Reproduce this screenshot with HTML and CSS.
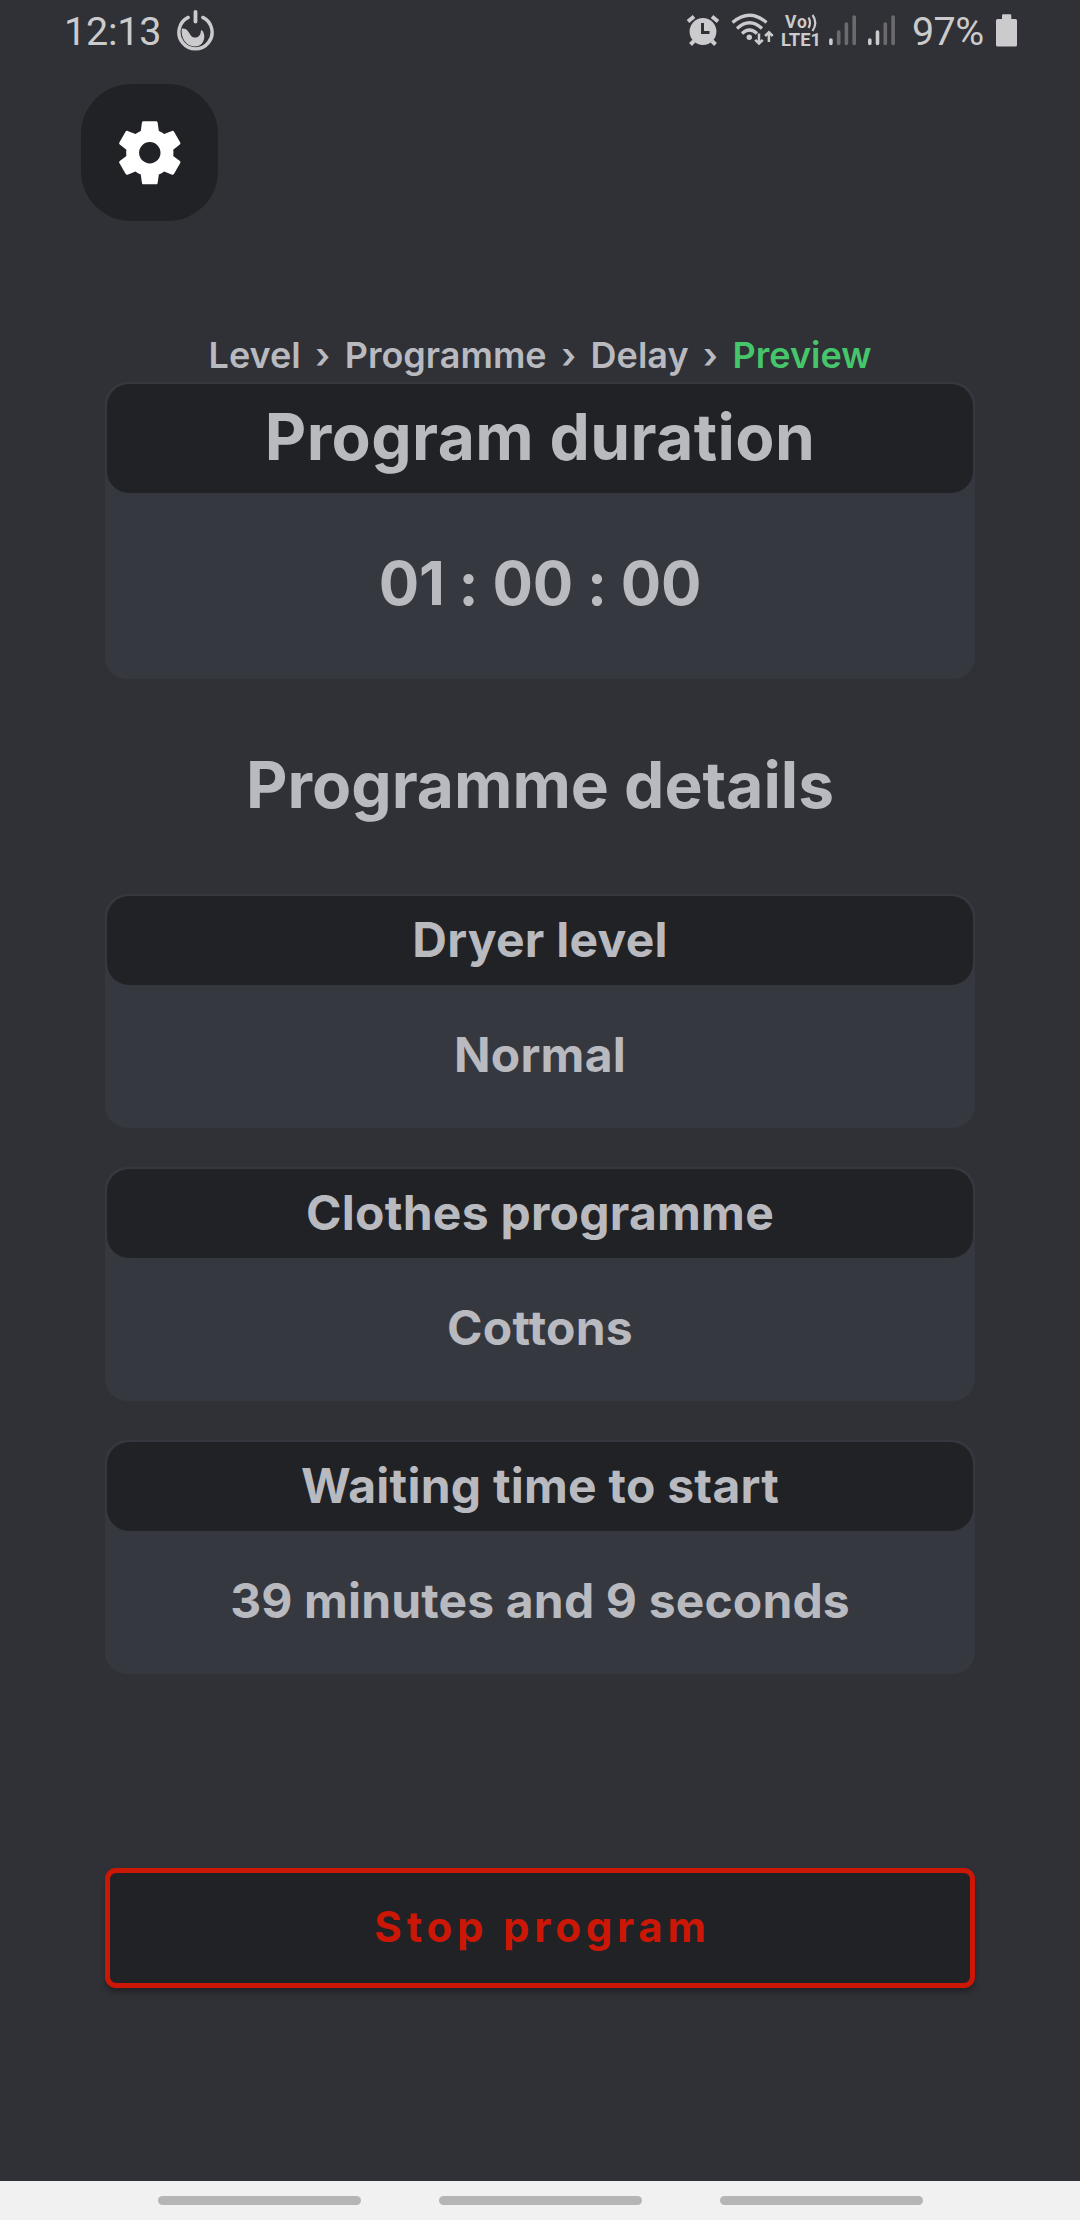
FILE: index.html
```html
<!DOCTYPE html>
<html lang="en">
<head>
<meta charset="utf-8">
<title>Dryer programme preview</title>
<link rel="stylesheet" href="styles.css">
</head>
<body>
<header class="status">
  <span class="status-text clock">12:13</span>
  <svg class="ico" width="40" height="60" viewBox="175 0 40 60">
    <path d="M188.2 17.4A16.6 16.6 0 1 0 202.800 17.400" fill="none" stroke="currentColor" stroke-width="3.4" stroke-linecap="round"/>
    <path d="M195.500 11.800V21.500" stroke="currentColor" stroke-width="3.800" stroke-linecap="round"/>
    <path d="M181.800 28.500C187 28 188.500 32 190.500 35C193.500 39.500 200.500 38 200.800 31.500L201.500 30C206.500 34 205 46.500 195 46.500C186 46.500 180.500 38 181.800 28.500Z" fill="currentColor"/>
  </svg>
  <div class="status-right">
    <svg class="ico" width="48" height="60" viewBox="680 0 48 60">
      <g fill="none" stroke="currentColor" stroke-width="4">
        <path d="M688 21.500L694 16.500M718 21.500L712 16.500M694 41L690.500 44.500M712 41L715.500 44.500"/>
      </g>
      <circle cx="703" cy="31.500" r="13.400" fill="currentColor"/>
      <path d="M702.500 23V32.500H709.500" fill="none" stroke="#303136" stroke-width="3"/>
    </svg>
    <svg class="ico" width="50" height="60" viewBox="728 0 50 60">
      <g fill="none" stroke="currentColor" stroke-width="3.200">
        <path d="M732.500 22.500Q749.500 8 766.500 22.500M737 28.500Q749.500 17 762 28.500M742 33.500Q749.500 26.500 757 33.500"/>
      </g>
      <circle cx="749.300" cy="37.200" r="2.700" fill="currentColor"/>
      <path d="M759 33.500V43M755.200 39.800L759 43.600L762.800 39.800M768.900 42V33M765.100 36L768.900 32.200L772.700 36" fill="none" stroke="currentColor" stroke-width="2.500"/>
    </svg>
    <svg class="ico" width="48" height="60" viewBox="778 0 48 60">
      <text class="net" x="785" y="28" font-size="17.500" textLength="22">Vo</text>
      <path d="M808.500 17.500Q811.500 22.500 808.500 28M812.500 15Q818 22.500 812.500 31" fill="none" stroke="currentColor" stroke-width="2.200"/>
      <text class="net" x="781" y="46" font-size="18.500" textLength="40" lengthAdjust="spacingAndGlyphs">LTE1</text>
    </svg>
    <svg class="ico" width="74" height="60" viewBox="826 0 74 60">
      <g stroke="currentColor" stroke-width="3.600" stroke-linecap="round">
        <path d="M830.900 40V43.500M869.800 40V43.500M877.500 32V43.500"/>
        <path class="dim" d="M838.700 32V43.500M846.400 24V43.500M854.200 17V43.500M885.300 24V43.500M893.100 17V43.500"/>
      </g>
    </svg>
    <span class="status-text battery-level">97%</span>
    <svg class="ico" width="30" height="60" viewBox="990 0 30 60">
      <path d="M1002 19V15.500Q1002 14.200 1003.300 14.200H1010Q1011.300 14.200 1011.300 15.500V19H1015.500Q1017 19 1017 20.500V45Q1017 46.600 1015.500 46.600H997.500Q996 46.600 996 45V20.500Q996 19 997.500 19Z" fill="currentColor"/>
    </svg>
  </div>
</header>

<main class="screen">
  <button class="settings" aria-label="Settings">
    <svg width="75.600" height="75.600" viewBox="0 0 24 24"><path fill="#fff" d="M19.430 12.980c.04-.32.07-.64.07-.98s-.03-.66-.07-.98l2.110-1.650c.19-.15.24-.42.12-.64l-2-3.460c-.12-.22-.39-.3-.61-.22l-2.490 1c-.52-.4-1.080-.73-1.690-.98l-.38-2.650C14.460 2.180 14.250 2 14 2h-4c-.25 0-.46.18-.49.42l-.38 2.650c-.61.25-1.170.59-1.690.98l-2.490-1c-.23-.09-.49 0-.61.22l-2 3.460c-.13.22-.07.49.12.64l2.110 1.650c-.04.32-.07.65-.07.98s.03.66.07.98l-2.110 1.650c-.19.15-.24.42-.12.64l2 3.460c.12.22.39.3.61.22l2.490-1c.52.4 1.080.73 1.690.98l.38 2.650c.03.24.24.42.49.42h4c.25 0 .46-.18.49-.42l.38-2.650c.61-.25 1.170-.59 1.690-.98l2.490 1c.23.09.49 0 .61-.22l2-3.460c.12-.22.07-.49-.12-.64l-2.110-1.650zM12 15.400a3.400 3.400 0 1 1 0-6.800 3.400 3.400 0 0 1 0 6.800z"/></svg>
  </button>

  <nav class="crumbs">
    <span>Level</span><span class="sep">›</span><span>Programme</span><span class="sep">›</span><span>Delay</span><span class="sep">›</span><span class="current">Preview</span>
  </nav>

  <section class="card card-main">
    <h1>Program duration</h1>
    <p>01 : 00 : 00</p>
  </section>

  <h2 class="title">Programme details</h2>

  <div class="details">
    <section class="card"><h3>Dryer level</h3><p>Normal</p></section>
    <section class="card"><h3>Clothes programme</h3><p>Cottons</p></section>
    <section class="card"><h3>Waiting time to start</h3><p class="wait">39 minutes and 9 seconds</p></section>
  </div>

  <button class="stop"><span>Stop program</span></button>
</main>

<footer class="navbar"><i></i><i></i><i></i></footer>
</body>
</html>
```
FILE: styles.css
```css
* { box-sizing: border-box; }

body {
  margin: 0;
  width: 1080px;
  height: 2220px;
  display: flex;
  flex-direction: column;
  overflow: hidden;
  background: #303136;
  color: #b9babf;
  font-family: Inter, "Liberation Sans", sans-serif;
  font-weight: 700;
  font-feature-settings: "calt" 0;
}

h1, h2, h3, p { margin: 0; font-weight: 700; }
button { font: inherit; }

.status {
  height: 60px;
  padding: 0 60px 0 64px;
  display: flex;
  align-items: center;
  color: #cbcbcd;
}
.ico { display: block; flex: none; }
.status-text {
  font: 400 39.500px/60px Roboto, "Liberation Sans", sans-serif;
  white-space: nowrap;
  padding-top: 3px;
}
.clock { width: 111px; letter-spacing: -0.200px; }
.status-right { margin-left: auto; display: flex; align-items: center; }
.battery-level { width: 90px; padding-left: 12px; letter-spacing: -0.600px; }
.net { font-family: Roboto, sans-serif; font-weight: 700; fill: currentColor; }
.dim { opacity: 0.38; }

.screen {
  flex: 1;
  padding: 24px 105px 0;
  display: flex;
  flex-direction: column;
}

.settings {
  width: 137px;
  height: 137px;
  margin-left: -24px;
  padding: 0;
  border: 0;
  border-radius: 50px;
  background: #212226;
  display: flex;
  align-items: center;
  justify-content: center;
}

.crumbs {
  margin-top: 109px;
  height: 52px;
  display: flex;
  justify-content: center;
  font-size: 36px;
  font-weight: 600;
  line-height: 50px;
}
.sep { width: 44px; text-align: center; }
.current { color: #45c66b; }

.card {
  height: 234px;
  padding: 2px;
  border-radius: 22px;
  background: #363840;
  display: flex;
  flex-direction: column;
  text-align: center;
  font-size: 48px;
  letter-spacing: 0.250px;
}
.card h1, .card h3 {
  height: 89px;
  border-radius: 22px;
  background: #212226;
  font-size: inherit;
  line-height: 87px;
}
.card p { line-height: 139px; }
.card .wait { letter-spacing: 0.150px; }

.card-main { height: 297px; }
.card-main h1 {
  height: 109px;
  font-size: 64px;
  line-height: 106px;
  letter-spacing: 0.400px;
}
.card-main p { font-size: 60px; line-height: 181px; letter-spacing: -0.200px; }

.title {
  margin-top: 56px;
  height: 159px;
  font-size: 64px;
  line-height: 100px;
  text-align: center;
}

.details { display: flex; flex-direction: column; gap: 39px; }

.stop {
  margin-top: 194px;
  height: 120px;
  padding: 0 0 3px 5px;
  border: 5px solid #cc1706;
  border-radius: 11px;
  background: #212226;
  box-shadow: 0 5px 5px rgba(0, 0, 0, 0.250);
  color: #cc1706;
  font-size: 42px;
  letter-spacing: 4.800px;
}

.navbar {
  height: 39px;
  background: #f1f1f1;
  display: flex;
  justify-content: center;
  align-items: center;
  gap: 78px;
}
.navbar i {
  width: 203px;
  height: 9px;
  border-radius: 5px;
  background: #b5b5b5;
}
```
